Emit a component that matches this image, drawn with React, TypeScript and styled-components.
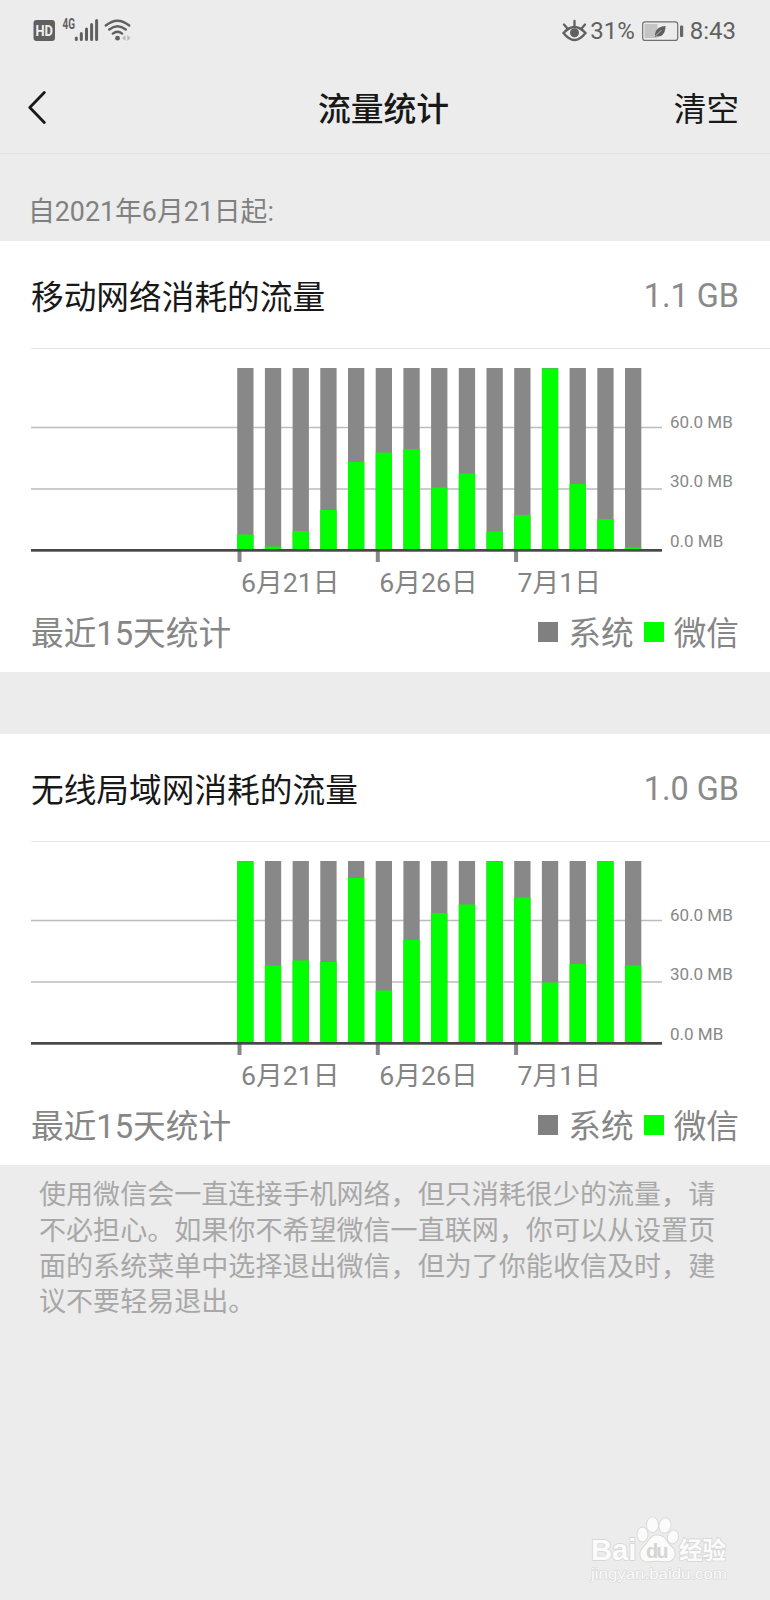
import React from 'react';
import styled, { createGlobalStyle } from 'styled-components';

const GlobalStyle = createGlobalStyle`
  * { box-sizing: border-box; }
  body {
    margin: 0;
    background: #ececec;
    font-family: Roboto, 'Noto Sans CJK SC', sans-serif;
  }
`;

const Screen = styled.div`
  position: relative;
  width: 770px;
  height: 1600px;
  overflow: hidden;
  display: flex;
  flex-direction: column;
  background: #ececec;
`;

const StatusBar = styled.div`
  display: flex;
  justify-content: space-between;
  align-items: center;
  height: 62px;
  padding: 0 34px 0 33px;
  color: #606060;
  font-size: 24px;
`;

const StatusGroup = styled.div`
  display: flex;
  align-items: center;
  line-height: 36px;
  svg { display: block; }
`;

const Percent = styled.span`
  margin: 0 7px 0 3px;
`;

const Clock = styled.span`
  margin-left: 6px;
`;

const NavBar = styled.header`
  display: grid;
  grid-template-columns: 1fr auto 1fr;
  align-items: center;
  height: 92px;
  padding: 0 31px 0 28px;
  border-bottom: 1px solid #e2e2e2;
  color: #181818;
`;

const Title = styled.h1`
  margin: 4px 0 0;
  font-size: 32.8px;
  font-weight: 500;
  line-height: 48px;
`;

const ClearButton = styled.button`
  justify-self: end;
  margin-top: 4px;
  padding: 0;
  border: 0;
  background: none;
  color: #181818;
  font: inherit;
  font-size: 32.6px;
  line-height: 48px;
`;

const Since = styled.div`
  height: 87px;
  padding: 38px 28px 0;
  color: #808080;
  font-size: 26.8px;
  line-height: 40px;
`;

const Card = styled.section`
  height: 431px;
  margin-bottom: 62px;
  background: #fff;
  &:last-of-type { margin-bottom: 0; }
`;

const CardHead = styled.div`
  display: flex;
  justify-content: space-between;
  align-items: center;
  height: 108px;
  margin-left: 31px;
  padding-right: 31px;
  border-bottom: 1px solid #e4e4e4;
  color: #181818;
  font-size: 32.7px;
`;

const Total = styled.span`
  padding-top: 3px;
  color: #8a8a8a;
  font-size: 32.4px;
`;

const ChartSvg = styled.svg`
  display: block;
`;

const CardFoot = styled.div`
  display: flex;
  justify-content: space-between;
  align-items: center;
  height: 60px;
  padding: 0 31px;
  color: #868686;
  font-size: 32.7px;
  line-height: 48px;
`;

const Legend = styled.div`
  display: flex;
  align-items: center;
`;

const Swatch = styled.i<{ $color: string }>`
  width: 20px;
  height: 20px;
  margin: -5px 10px 0 10px;
  background: ${(p) => p.$color};
`;

const Note = styled.p`
  width: 680px;
  margin: 13px 0 0 39px;
  color: #a8a8a8;
  font-size: 27.06px;
  line-height: 35.8px;
`;

const Watermark = styled.div`
  position: absolute;
  right: 36px;
  bottom: 12px;
  svg { display: block; }
`;

const GREY = '#888888';
const GREEN = '#00ff00';
const AXIS_Y = 200;
const TOP_Y = 19;

const mobile = [16, 4, 19.5, 40.5, 88.5, 98, 101.5, 63, 77, 19, 35.5, 182, 66.5, 31.5, 3];
const wifi = [182, 78, 83, 81.5, 165.5, 53, 103.5, 130.5, 139, 182, 146, 61, 79.5, 182, 78];

function Chart({ values }: { values: number[] }) {
  return (
    <ChartSvg width="770" height="255" viewBox="0 0 770 255">
      <path d="M31 78.5H662M31 140H662" stroke="#bcbcbc" strokeWidth="1.5" />
      {values.map((v, i) => {
        const x = 237.2 + i * 27.7;
        return (
          <g key={i}>
            <rect x={x} y={TOP_Y} width="16.3" height={AXIS_Y - TOP_Y} fill={GREY} />
            <rect x={x} y={Math.max(TOP_Y, 201.5 - v)} width="16.3" height={Math.min(v, 182.5)} fill={GREEN} />
          </g>
        );
      })}
      {['6月21日', '6月26日', '7月1日'].map((label, i) => (
        <g key={label}>
          <rect x={237.5 + i * 138.3} y="202" width="4" height="11" fill={GREY} />
          <text x={241 + i * 138.3} y="242.5" fontSize="26.7" fill="#848484">{label}</text>
        </g>
      ))}
      <rect x="31" y="200" width="631" height="2.7" fill="#484848" />
      <g fontSize="17" fill="#888">
        <text x="670" y="79">60.0 MB</text>
        <text x="670" y="138">30.0 MB</text>
        <text x="670" y="198">0.0 MB</text>
      </g>
    </ChartSvg>
  );
}

function TrafficCard({ name, total, values }: { name: string; total: string; values: number[] }) {
  return (
    <Card>
      <CardHead>
        <span>{name}</span>
        <Total>{total}</Total>
      </CardHead>
      <Chart values={values} />
      <CardFoot>
        <span>最近15天统计</span>
        <Legend>
          <Swatch $color="#808080" />系统
          <Swatch $color={GREEN} />微信
        </Legend>
      </CardFoot>
    </Card>
  );
}

function SignalIcons() {
  return (
    <svg width="100" height="30" viewBox="33 16 100 30" fill="#606060">
      <rect x="33.5" y="20" width="21.5" height="21" rx="3" />
      <text x="44.2" y="35.8" fontSize="14.5" fontWeight="700" textAnchor="middle" fill="#f0f0f0" textLength="17.5" lengthAdjust="spacingAndGlyphs">HD</text>
      <text x="62.5" y="29" fontSize="14" fontWeight="700" textLength="12.5" lengthAdjust="spacingAndGlyphs">4G</text>
      <path d="M76.3 38V39.5M81.3 33.5V39.5M86.5 29V39.5M91.6 24.5V39.5M96.6 20.5V39.5" stroke="#606060" strokeWidth="3" strokeLinecap="round" />
      <g fill="none" stroke="#606060" strokeWidth="2.4" strokeLinecap="round">
        <path d="M105.8 25.5Q117.5 15.8 129.2 25.5" />
        <path d="M109.2 29.5Q117.5 22.8 125.8 29.5" />
        <path d="M112.8 33.6Q117.5 30 122.2 33.6" />
      </g>
      <circle cx="117.5" cy="38.2" r="2.4" />
      <path d="M125.5 35V41L122 38ZM127.2 35V41L130.7 38Z" fill="#bbb" />
    </svg>
  );
}

function EyeIcon() {
  return (
    <svg width="25" height="24" viewBox="562.5 18.5 25 24" fill="none" stroke="#606060" strokeWidth="2.3" strokeLinecap="round">
      <path d="M564 32.5Q575 20.5 586 32.5Q575 46.5 564 32.5Z" />
      <path d="M575 20.5V25.5M564.5 24L567.5 27.5M585.5 24L582.5 27.5" />
      <circle cx="575" cy="32.3" r="4.5" fill="#606060" stroke="none" />
    </svg>
  );
}

function BatteryIcon() {
  return (
    <svg width="42" height="22" viewBox="642.5 19 42 22">
      <rect x="643.2" y="20.8" width="35" height="18.6" rx="2.5" fill="none" stroke="#707070" strokeWidth="1.2" />
      <rect x="645" y="23" width="13" height="14" fill="#c4c4c4" />
      <path d="M655.5 36C655 29 659 25.5 666 25C666 32 662.5 37 657 35.2Z" fill="#606060" />
      <path d="M656 35L662 29" stroke="#ddd" strokeWidth=".7" />
      <rect x="680.5" y="24.5" width="3.2" height="11.5" rx="1" fill="#666" />
    </svg>
  );
}

function BaiduMark() {
  return (
    <svg width="150" height="74" viewBox="584 1514 150 74" fill="#fbfbfb" stroke="#d8d8d8" strokeWidth="1.8" paintOrder="stroke">
      <text x="591" y="1559.5" fontSize="29.5" fontWeight="700" fontFamily="Liberation Sans" textLength="45.5" lengthAdjust="spacingAndGlyphs">Bai</text>
      <ellipse cx="642.5" cy="1534.5" rx="5" ry="7" />
      <ellipse cx="652.5" cy="1524.7" rx="5.5" ry="7.4" />
      <ellipse cx="665" cy="1525.5" rx="5.5" ry="7.2" transform="rotate(12 665 1525.5)" />
      <ellipse cx="673" cy="1537" rx="5" ry="6.5" transform="rotate(15 673 1537)" />
      <path d="M657 1535.5C666 1535.5 666 1543 672 1547.5C677 1552.5 675 1561.5 666 1561.5Q657 1560 648 1561.5C639 1561.5 639 1552 643 1548C649 1543 649 1535.5 657 1535.5Z" />
      <text x="646" y="1557.5" fontSize="20" fontWeight="700" fontFamily="Liberation Sans" fill="#d4d4d4" stroke="none" textLength="22.5">du</text>
      <text x="679" y="1558.5" fontSize="23.5" fontWeight="700" textLength="47">经验</text>
      <text x="591" y="1578.5" fontSize="14" fontFamily="Liberation Sans" textLength="136" lengthAdjust="spacingAndGlyphs" strokeWidth="1.2">jingyan.baidu.com</text>
    </svg>
  );
}

export default function App() {
  return (
    <>
      <GlobalStyle />
      <Screen>
        <StatusBar>
          <StatusGroup><SignalIcons /></StatusGroup>
          <StatusGroup>
            <EyeIcon />
            <Percent>31%</Percent>
            <BatteryIcon />
            <Clock>8:43</Clock>
          </StatusGroup>
        </StatusBar>
        <NavBar>
          <svg width="20" height="36" viewBox="29 89 20 36" fill="none" stroke="#181818" strokeWidth="2.8" strokeLinecap="round" strokeLinejoin="round">
            <path d="M45.3 91.5L30.8 106.5L45.3 121.5" />
          </svg>
          <Title>流量统计</Title>
          <ClearButton>清空</ClearButton>
        </NavBar>
        <Since>自2021年6月21日起:</Since>
        <TrafficCard name="移动网络消耗的流量" total="1.1 GB" values={mobile} />
        <TrafficCard name="无线局域网消耗的流量" total="1.0 GB" values={wifi} />
        <Note>
          使用微信会一直连接手机网络，但只消耗很少的流量，请不必担心。如果你不希望微信一直联网，你可以从设置页面的系统菜单中选择退出微信，但为了你能收信及时，建议不要轻易退出。
        </Note>
        <Watermark><BaiduMark /></Watermark>
      </Screen>
    </>
  );
}
